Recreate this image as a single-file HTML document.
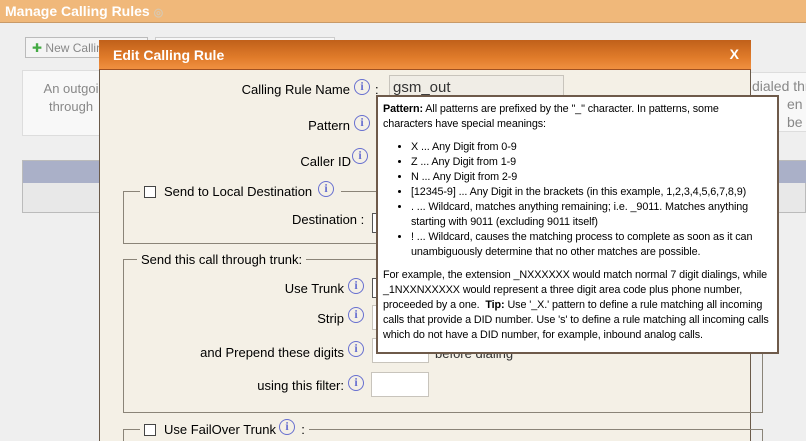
<!DOCTYPE html>
<html><head><meta charset="utf-8"><style>
*{box-sizing:border-box;margin:0;padding:0}
html,body{width:806px;height:441px;overflow:hidden}
body{background:#efefef;font-family:"Liberation Sans",sans-serif;position:relative;color:#000}
.a{position:absolute}
.top{left:0;top:0;width:806px;height:23px;background:#f0b87a;border-bottom:1px solid #c89a68}
.top span{position:absolute;left:5px;top:3px;color:#fff;font-weight:bold;font-size:14px}
.dlg{left:99px;top:40px;width:652px;height:401px;background:#f4f0e6;border-left:1px solid #6a5a4a;border-right:1px solid #6a5a4a}
.tb{left:99px;top:40px;width:652px;height:30px;background:linear-gradient(#c0601a,#e07b2a 60%,#f09040);border-bottom:1px solid #a05020}
.tb span{position:absolute;left:14px;top:7px;color:#fff;font-weight:bold;font-size:14px}
.tb b{position:absolute;right:12px;top:6px;color:#fff;font-size:14px}
.lbl{font-size:13px;color:#000;white-space:nowrap}
.r{text-align:right}
.i{position:absolute;width:16px;height:16px;border:1.5px solid #6870d0;border-radius:50%;color:#6870d0;font:bold 12px "Liberation Serif",serif;text-align:center;line-height:13px}
.fs{border:1px solid #8a8478;position:absolute}
.inp{position:absolute;background:#fff;border:1px solid #c8c4bc}
.cb{position:absolute;width:12px;height:12px;border:1px solid #444;background:#fff}
.tip{left:376px;top:95px;width:403px;height:259px;background:#fff;border:2px solid #6e5a4a;font-size:10.8px;line-height:15px;padding:5px 6px 5px 5px;color:#000;letter-spacing:-0.1px}
.tip p{width:375px}
.tip ul{margin:8px 0 8px 28px}
.tip li{list-style:disc}
</style></head><body>
<div class="a top"><span>Manage Calling Rules <span style="position:static;color:#d8c8b0;font-size:11px">◎</span></span></div>
<div class="a" style="left:25px;top:37px;width:123px;height:21px;border:1px solid #bbb;background:#f4f4f4;font-size:12px;color:#888;padding:3px 6px"><span style="color:#4a4">✚</span> New Calling</div>
<div class="a" style="left:155px;top:37px;width:180px;height:21px;border:1px solid #ccc;background:#f7f7f7"></div>
<div class="a" style="left:22px;top:70px;width:90px;height:66px;border:1px solid #ddd;background:#f8f8f8;font-size:13px;color:#888;text-align:center;line-height:18px;padding-top:9px;padding-left:8px">An outgoi<br>through</div>
<div class="a" style="left:22px;top:160px;width:784px;height:53px;border:1px solid #bbb;background:#e8e8e8"></div>
<div class="a" style="left:23px;top:161px;width:783px;height:22px;background:#aab0c8"></div>
<div class="a" style="left:751px;top:72px;width:55px;height:60px;background:#f8f8f8;border-top:1px solid #ddd;border-bottom:1px solid #ddd;font-size:14px;color:#888;line-height:18px;padding-top:4px;padding-left:1px;white-space:nowrap">dialed thro<br>&nbsp;&nbsp;&nbsp;&nbsp;&nbsp;&nbsp;&nbsp;&nbsp;&nbsp;en<br>&nbsp;&nbsp;&nbsp;&nbsp;&nbsp;&nbsp;&nbsp;&nbsp;&nbsp;be</div>

<div class="a dlg"></div>
<div class="a tb"><span>Edit Calling Rule</span><b>X</b></div>

<div class="a lbl r" style="right:456px;top:82px">Calling Rule Name</div><div class="i" style="left:354px;top:79px">i</div><div class="a lbl" style="left:375px;top:82px">:</div>
<div class="inp" style="left:389px;top:75px;width:175px;height:25px;background:#f0ede6;font-size:15px;padding:3px 3px;color:#333">gsm_out</div>
<div class="a lbl r" style="right:456px;top:118px">Pattern</div><div class="i" style="left:354px;top:115px">i</div>
<div class="a lbl r" style="right:455px;top:154px">Caller ID</div><div class="i" style="left:352px;top:148px">i</div>

<div class="fs" style="left:123px;top:191px;width:640px;height:53px"></div>
<div class="a lbl" style="left:140px;top:184px;background:#f4f0e6;padding:0 4px"><span class="cb" style="position:relative;display:inline-block;top:2px;margin-right:8px"></span>Send to Local Destination &nbsp;&nbsp;&nbsp;&nbsp;&nbsp;&nbsp;</div><div class="i" style="left:318px;top:181px">i</div>
<div class="a lbl" style="left:292px;top:212px">Destination :</div>
<div class="inp" style="left:372px;top:213px;width:60px;height:20px;border-color:#555"></div>

<div class="fs" style="left:123px;top:259px;width:640px;height:154px"></div>
<div class="a lbl" style="left:137px;top:252px;background:#f4f0e6;padding:0 4px">Send this call through trunk:</div>
<div class="a lbl r" style="right:462px;top:281px">Use Trunk</div><div class="i" style="left:348px;top:278px">i</div>
<div class="inp" style="left:372px;top:278px;width:60px;height:20px;border-color:#555"></div>
<div class="a lbl r" style="right:462px;top:311px">Strip</div><div class="i" style="left:348px;top:307px">i</div>
<div class="inp" style="left:372px;top:305px;width:57px;height:25px"></div>
<div class="a lbl r" style="right:462px;top:345px">and Prepend these digits</div><div class="i" style="left:348px;top:341px">i</div>
<div class="inp" style="left:372px;top:338px;width:57px;height:25px"></div>
<div class="a lbl" style="left:435px;top:346px;color:#333">before dialing</div>
<div class="a lbl r" style="right:462px;top:378px">using this filter:</div><div class="i" style="left:348px;top:375px">i</div>
<div class="inp" style="left:371px;top:372px;width:58px;height:25px"></div>

<div class="fs" style="left:123px;top:429px;width:640px;height:30px"></div>
<div class="a lbl" style="left:140px;top:422px;background:#f4f0e6;padding:0 4px"><span class="cb" style="position:relative;display:inline-block;top:2px;margin-right:8px"></span>Use FailOver Trunk &nbsp;&nbsp;&nbsp;&nbsp;&nbsp;&nbsp;:</div><div class="i" style="left:279px;top:419px">i</div>

<div class="a tip"><p><b>Pattern:</b> All patterns are prefixed by the "_" character. In patterns, some characters have special meanings:</p>
<ul><li>X ... Any Digit from 0-9</li><li>Z ... Any Digit from 1-9</li><li>N ... Any Digit from 2-9</li><li>[12345-9] ... Any Digit in the brackets (in this example, 1,2,3,4,5,6,7,8,9)</li><li>. ... Wildcard, matches anything remaining; i.e. _9011. Matches anything starting with 9011 (excluding 9011 itself)</li><li>! ... Wildcard, causes the matching process to complete as soon as it can unambiguously determine that no other matches are possible.</li></ul>
<p style="width:392px">For example, the extension _NXXXXXX would match normal 7 digit dialings, while _1NXXNXXXXX would represent a three digit area code plus phone number, proceeded by a one. &nbsp;<b>Tip:</b> Use '_X.' pattern to define a rule matching all incoming calls that provide a DID number. Use 's' to define a rule matching all incoming calls which do not have a DID number, for example, inbound analog calls.</p></div>
</body></html>
